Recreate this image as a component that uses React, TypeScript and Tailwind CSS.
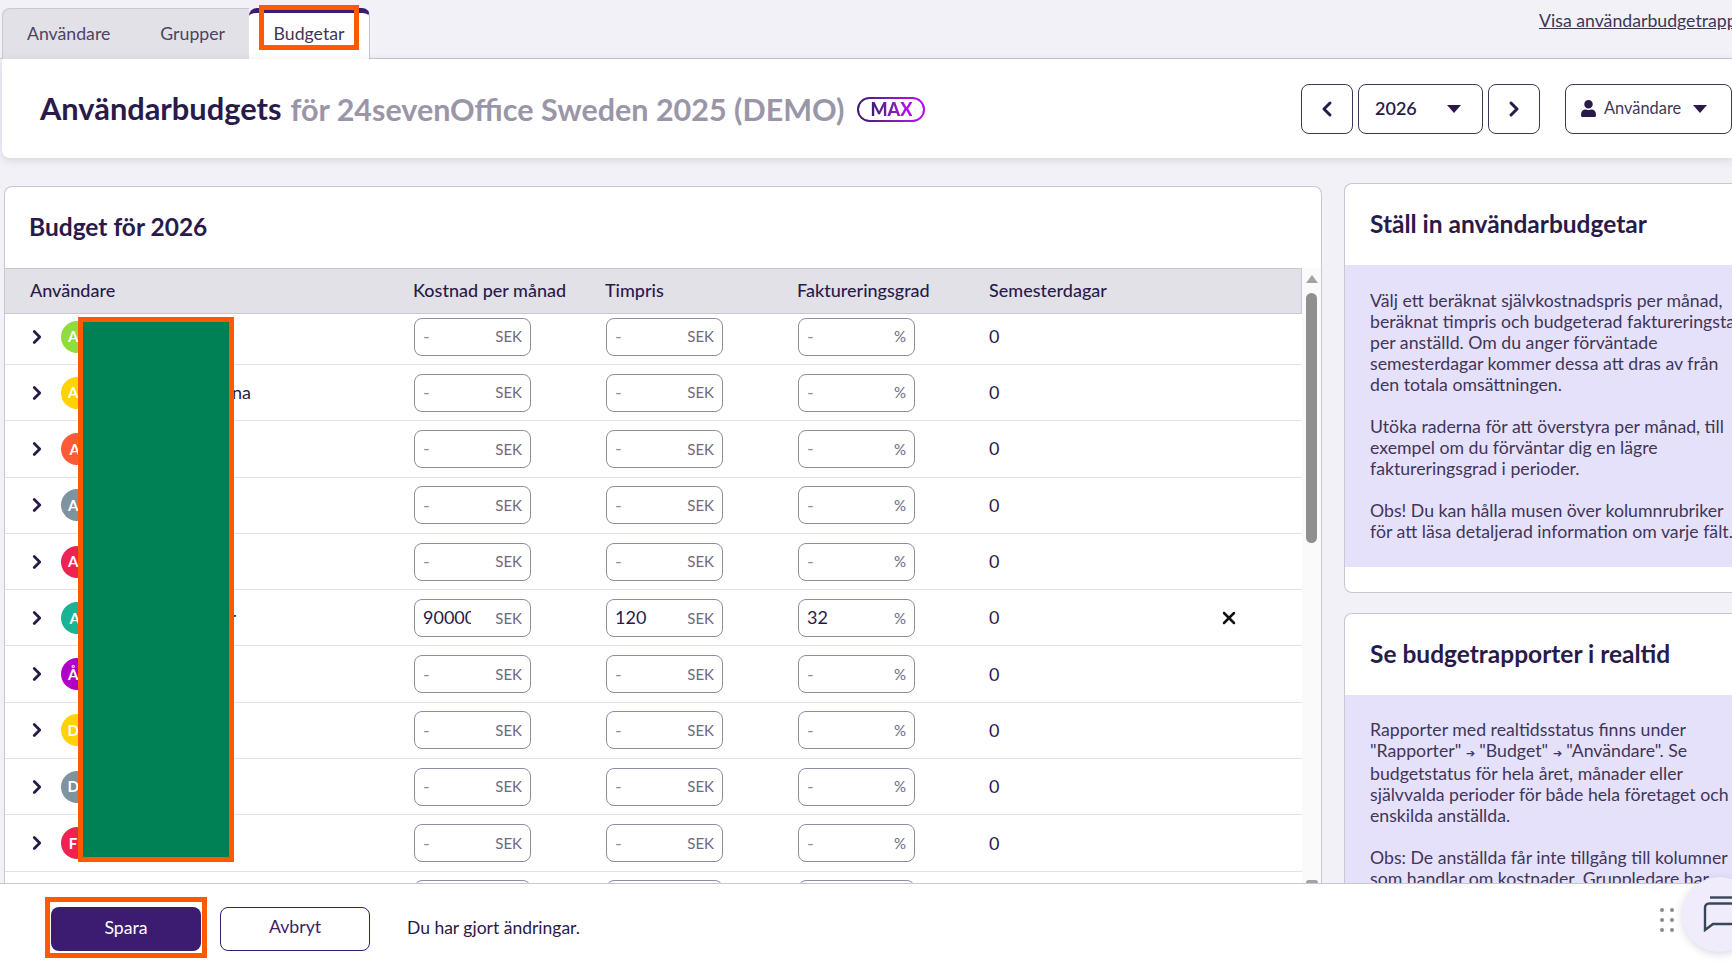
import { ChevronLeft, ChevronRight, X } from "lucide-react";
import { FaUser } from "react-icons/fa";

const rows = [
  { a: "AL", c: "bg-[#8fdc3c]", tail: "" },
  { a: "AL", c: "bg-[#ffd200]", tail: "na" },
  { a: "AI", c: "bg-[#ff5a36]", tail: "" },
  { a: "AL", c: "bg-[#7f929f]", tail: "" },
  { a: "AL", c: "bg-[#ef2353]", tail: "" },
  { a: "AI", c: "bg-[#1ab395]", tail: "r", v: ["90000", "120", "32"] },
  { a: "ÅL", c: "bg-[#b000c8]", tail: "" },
  { a: "DL", c: "bg-[#ffd200]", tail: "" },
  { a: "DL", c: "bg-[#7f929f]", tail: "" },
  { a: "FL", c: "bg-[#ef2353]", tail: "" },
  { a: "GL", c: "bg-[#8fdc3c]", tail: "" },
];

function Field({ value, unit }: { value?: string; unit: string }) {
  return (
    <div className="ml-[1px] flex h-[38px] w-[117px] items-center justify-between rounded-lg border border-[#8f8ba3] bg-white pl-[8px] pr-[8px]">
      <input
        readOnly
        value={value ?? ""}
        placeholder="-"
        className="w-[48px] bg-transparent text-[18px] text-[#2a1a4a] outline-none placeholder:text-[#8f8ba3]"
      />
      <span className="text-[15px] text-[#6d6a80]">{unit}</span>
    </div>
  );
}

function Caret({ className }: { className: string }) {
  return (
    <svg viewBox="0 0 14 8" className={className} fill="currentColor">
      <polygon points="0,0 14,0 7,8" />
    </svg>
  );
}

function InfoCard({ title, className, bodyClass, children }: { title: string; className: string; bodyClass: string; children: React.ReactNode }) {
  return (
    <section className={`w-[440px] overflow-hidden rounded-tl-lg rounded-bl-lg border border-r-0 border-[#c9c7d3] bg-white ${className}`}>
      <h2 className="flex h-[81px] items-center pl-[25px] text-[24.5px] font-bold text-[#2a1a4a]">{title}</h2>
      <div className={`whitespace-nowrap bg-[#e6e1fb] pl-[25px] text-[17.7px] leading-[21px] text-[#3f3658] ${bodyClass}`}>{children}</div>
    </section>
  );
}

export default function App() {
  return (
    <div className="relative flex h-[966px] w-[1732px] flex-col overflow-hidden bg-[#f1f1f7] font-['Lato','Liberation_Sans',sans-serif] text-[#2a1a4a]">
      {/* tabs */}
      <div className="flex h-[59px] shrink-0 border-b border-[#c9c7d3]">
        <div className="ml-[2px] mt-[8px] flex h-[51px] w-[247px] shrink-0 rounded-tl-lg border-l border-t border-[#c9c7d3] bg-[#e2e1e8] text-[17.7px] text-[#4b4560]">
          <span className="ml-[24px] mt-[12px]">Användare</span>
          <span className="ml-[50px] mt-[12px]">Grupper</span>
        </div>
        <div className="-mb-px mt-[8px] flex h-[52px] w-[121px] shrink-0 justify-center rounded-t-lg border-r border-t-[5px] border-r-[#c9c7d3] border-t-[#3b1c70] bg-white pt-[8px] text-[17.7px] text-[#3f3658]">
          Budgetar
        </div>
        <a className="ml-[1169px] mt-[8px] shrink-0 text-[17.7px] text-[#3f3658] underline">Visa användarbudgetrapport</a>
      </div>

      {/* header card */}
      <div className="ml-[2px] flex h-[99px] shrink-0 items-center rounded-bl-lg bg-white pl-[38px] shadow-[0_2px_8px_rgba(60,50,90,0.15)]">
        <h1 className="mt-[2px] text-[30.8px] font-bold text-[#2a1a4a]">Användarbudgets</h1>
        <span className="ml-[9px] mt-[2px] text-[30.5px] font-bold text-[#9a96a8]">för 24sevenOffice Sweden 2025 (DEMO)</span>
        <span className="ml-[13px] mt-[1px] flex h-[25px] w-[68px] items-center justify-center rounded-full bg-gradient-to-r from-[#3b1c70] to-[#c000f0] p-[2px]">
          <span className="flex h-full w-full items-center justify-center rounded-full bg-white">
            <span className="bg-gradient-to-r from-[#3b1c70] to-[#c000f0] bg-clip-text text-[18px] font-black text-transparent">MAX</span>
          </span>
        </span>
        <div className="ml-auto flex gap-[5px]">
          <button className="flex h-[50px] w-[52px] items-center justify-center rounded-lg border border-[#3f3658]">
            <ChevronLeft size={24} strokeWidth={3} />
          </button>
          <button className="flex h-[50px] w-[125px] items-center justify-between rounded-lg border border-[#3f3658] pl-[16px] pr-[21px] text-[18px] font-semibold">
            2026
            <Caret className="h-[8px] w-[14px]" />
          </button>
          <button className="flex h-[50px] w-[52px] items-center justify-center rounded-lg border border-[#3f3658]">
            <ChevronRight size={24} strokeWidth={3} />
          </button>
          <button className="ml-[20px] flex h-[50px] w-[167px] items-center rounded-lg border border-[#3f3658] pl-[14px] text-[16.4px] text-[#3f3658]">
            <FaUser size={17} className="text-[#2a1a4a]" />
            <span className="ml-[7px]">Användare</span>
            <Caret className="ml-[12px] h-[8px] w-[14px] text-[#2a1a4a]" />
          </button>
        </div>
      </div>

      {/* content */}
      <div className="flex min-h-0 flex-1 overflow-hidden">
        <main className="ml-[4px] mt-[28px] w-[1318px] shrink-0 rounded-t-lg border border-b-0 border-[#c9c7d3] bg-white">
          <h2 className="mb-[1px] flex h-[80px] items-center pl-[24px] text-[24.5px] font-bold text-[#2a1a4a]">Budget för 2026</h2>
          <div className="flex">
            <div className="w-[1297px] shrink-0">
              <div className="grid h-[46px] grid-cols-[408px_192px_192px_192px_1fr] items-center border border-l-0 border-[#c9c7d3] bg-[#e2e1e8] pb-[2px] text-[18px] font-medium text-[#2a1a4a]">
                <span className="pl-[25px]">Användare</span>
                <span>Kostnad per månad</span>
                <span>Timpris</span>
                <span>Faktureringsgrad</span>
                <span>Semesterdagar</span>
              </div>
              {rows.map((r, i) => (
                <div
                  key={i}
                  className={`grid grid-cols-[408px_192px_192px_192px_1fr] items-center border-b border-[#e2e1e8] ${i === 0 ? "h-[51px] pb-[5px]" : "h-[56.3px]"}`}
                >
                  <div className="flex items-center">
                    <ChevronRight size={22} strokeWidth={3} className="ml-[21px]" />
                    <span className={`ml-[13px] flex h-[32px] w-[32px] shrink-0 items-center justify-center rounded-full text-[15px] font-bold text-white ${r.c}`}>{r.a}</span>
                    <span className={`text-right text-[18px] text-[#2a1a4a] ${r.tail === "r" ? "w-[143px]" : "w-[158px]"}`}>{r.tail}</span>
                  </div>
                  <Field value={r.v?.[0]} unit="SEK" />
                  <Field value={r.v?.[1]} unit="SEK" />
                  <Field value={r.v?.[2]} unit="%" />
                  <div className="flex items-center text-[18px]">
                    <span>0</span>
                    {r.v && <X size={20} strokeWidth={3} className="ml-[220px] text-[#111]" />}
                  </div>
                </div>
              ))}
            </div>
            <div className="flex w-[19px] shrink-0 flex-col items-center bg-[#fafafa]">
              <svg viewBox="0 0 12 8" className="mt-[7px] h-[8px] w-[12px] text-[#a3a3a3]" fill="currentColor">
                <polygon points="6,0 12,8 0,8" />
              </svg>
              <div className="mt-[10px] h-[250px] w-[11px] rounded-full bg-[#8f8f8f]" />
              <div className="mt-[337px] h-[5px] w-[12px] rounded-sm bg-[#a3a3a3]" />
            </div>
          </div>
        </main>

        <aside className="ml-[22px] flex shrink-0 flex-col">
          <InfoCard title="Ställ in användarbudgetar" className="mt-[25px] h-[410px] shrink-0" bodyClass="pt-[25px]">
            Välj ett beräknat självkostnadspris per månad,<br />
            beräknat timpris och budgeterad faktureringstakt<br />
            per anställd. Om du anger förväntade<br />
            semesterdagar kommer dessa att dras av från<br />
            den totala omsättningen.<br />
            <br />
            Utöka raderna för att överstyra per månad, till<br />
            exempel om du förväntar dig en lägre<br />
            faktureringsgrad i perioder.<br />
            <br />
            Obs! Du kan hålla musen över kolumnrubriker<br />
            för att läsa detaljerad information om varje fält.<br />
            <div className="h-[25px]" />
          </InfoCard>
          <InfoCard title="Se budgetrapporter i realtid" className="mt-[20px] shrink-0" bodyClass="pt-[24px]">
            Rapporter med realtidsstatus finns under<br />
            "Rapporter" <span className="text-[11px]">➔</span> "Budget" <span className="text-[11px]">➔</span> "Användare". Se<br />
            budgetstatus för hela året, månader eller<br />
            självvalda perioder för både hela företaget och<br />
            enskilda anställda.<br />
            <br />
            Obs: De anställda får inte tillgång till kolumner<br />
            som handlar om kostnader. Gruppledare har<br />
            tillgång till mer information.
          </InfoCard>
        </aside>
      </div>

      {/* footer */}
      <footer className="z-10 flex h-[83px] shrink-0 items-center border-t border-[#c9c7d3] bg-white pl-[51px] pt-[7px]">
        <button className="h-[44px] w-[150px] rounded-lg bg-[#3b1c70] text-[17.7px] text-white">Spara</button>
        <button className="ml-[19px] h-[44px] w-[150px] rounded-lg border border-[#3b1c70] pb-[2px] text-[17.7px] text-[#3b1c70]">Avbryt</button>
        <span className="ml-[37px] text-[17.5px] text-[#2a1a4a]">Du har gjort ändringar.</span>
      </footer>

      {/* annotations and overlays */}
      <div className="absolute left-[259px] top-[5px] z-20 h-[45px] w-[100px] border-[5px] border-[#ff5a00]" />
      <div className="absolute left-[78px] top-[317px] z-20 h-[545px] w-[156px] border-[5px] border-[#ff5a00] bg-[#008055]" />
      <div className="absolute left-[45px] top-[897px] z-20 h-[61px] w-[162px] border-[5px] border-[#ff5a00]" />

      <svg viewBox="0 0 14 24" className="absolute left-[1660px] top-[908px] z-20 h-[24px] w-[14px] text-[#8a8a8a]" fill="currentColor">
        <circle cx="2" cy="2" r="2" /><circle cx="12" cy="2" r="2" />
        <circle cx="2" cy="12" r="2" /><circle cx="12" cy="12" r="2" />
        <circle cx="2" cy="22" r="2" /><circle cx="12" cy="22" r="2" />
      </svg>
      <div className="absolute left-[1682px] top-[877px] z-20 flex h-[75px] w-[75px] items-start rounded-full bg-[#f0ecfb] pl-[21px] pt-[19px] shadow-[0_2px_8px_rgba(60,50,90,0.2)]">
        <svg viewBox="0 0 32 36" className="h-[36px] w-[32px] shrink-0 text-[#37475a]" fill="none" stroke="currentColor" strokeWidth="2.4">
          <path d="M7 1.5h24" />
          <path d="M6 7.5h22a4 4 0 0 1 4 4v12.5a4 4 0 0 1-4 4H10l-8 6V11.5a4 4 0 0 1 4-4z" />
        </svg>
      </div>
    </div>
  );
}
